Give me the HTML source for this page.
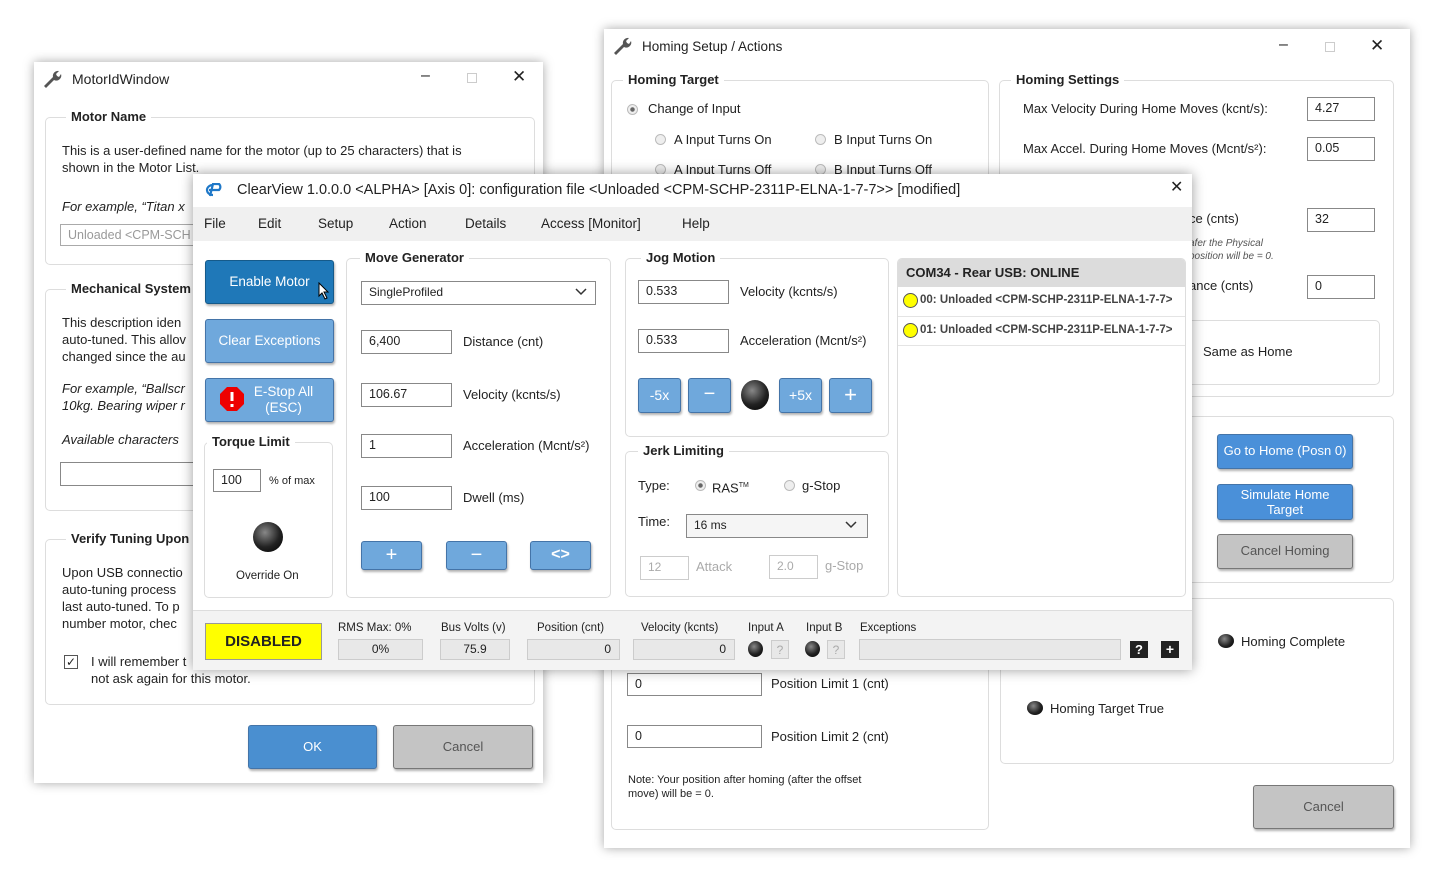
<!DOCTYPE html>
<html><head><meta charset="utf-8"><style>
*{box-sizing:border-box;margin:0;padding:0}
body{width:1452px;height:884px;background:#fff;position:relative;overflow:hidden;font-family:"Liberation Sans",sans-serif;font-size:13px;color:#222}
.a{position:absolute;white-space:nowrap}
.win{position:absolute;background:#fff;box-shadow:0 0 10px rgba(0,0,0,.35)}
.fs{position:absolute;border:1px solid #ddd;border-radius:5px}
.lg{position:absolute;background:#fff;padding:0 5px;font-weight:bold;font-size:13px;color:#222;line-height:16px}
.in{position:absolute;border:1px solid #888;background:#fff;font-size:12.5px;padding-left:7px;line-height:21px}
.btn{position:absolute;border:1px solid #4474a8;border-radius:3px;color:#fff;text-align:center;box-shadow:1px 2px 2px rgba(0,0,0,.3);font-size:13px}
.lb{background:#6fa8dc}
.gb{background:#c4c4c4;border-color:#777;color:#555}
.led{position:absolute;border-radius:50%;background:radial-gradient(circle at 40% 35%,#888,#222 55%,#000)}
.t{position:absolute;white-space:nowrap;line-height:16px}
.rad{position:absolute;width:11px;height:11px;border-radius:50%;border:1px solid #bbb;background:#eee}
.sb{position:absolute;background:#e8e8e8;border:1px solid #ccc;font-size:12px;text-align:right;padding-right:8px;line-height:18px}
</style></head><body>

<!-- Motor ID window -->
<div class="win" style="left:34px;top:62px;width:509px;height:721px">
<svg class="a" style="left:8px;top:7px" width="20" height="20" viewBox="0 0 20 20"><path d="M2 17 L11 8 A5 5 0 0 1 17 2 L14 5 L15 7 L17 8 L19 5 A5 5 0 0 1 12 11 L4 19 Z" fill="#555"/></svg>
<div class="t" style="left:38px;top:9px;font-size:14px">MotorIdWindow</div>
<div class="t" style="left:387px;top:6px;font-size:16px">–</div>
<div class="a" style="left:433px;top:11px;width:10px;height:10px;border:1px solid #ccc"></div>
<div class="t" style="left:478px;top:7px;font-size:17px">✕</div>
<div class="fs" style="left:11px;top:55px;width:490px;height:148px"></div>
<div class="lg" style="left:32px;top:47px">Motor Name</div>
<div class="t" style="left:28px;top:81px">This is a user-defined name for the motor (up to 25 characters) that is</div>
<div class="t" style="left:28px;top:98px">shown in the Motor List.</div>
<div class="t" style="left:28px;top:137px;font-style:italic">For example, “Titan x</div>
<div class="in" style="left:26px;top:162px;width:170px;height:22px;color:#999;border-color:#aaa">Unloaded &lt;CPM-SCH</div>
<div class="fs" style="left:11px;top:227px;width:490px;height:222px"></div>
<div class="lg" style="left:32px;top:219px">Mechanical System I</div>
<div class="t" style="left:28px;top:253px">This description iden</div>
<div class="t" style="left:28px;top:270px">auto-tuned. This allov</div>
<div class="t" style="left:28px;top:287px">changed since the au</div>
<div class="t" style="left:28px;top:319px;font-style:italic">For example, “Ballscr</div>
<div class="t" style="left:28px;top:336px;font-style:italic">10kg. Bearing wiper r</div>
<div class="t" style="left:28px;top:370px;font-style:italic">Available characters</div>
<div class="in" style="left:26px;top:400px;width:170px;height:24px"></div>
<div class="fs" style="left:11px;top:477px;width:490px;height:166px"></div>
<div class="lg" style="left:32px;top:469px">Verify Tuning Upon (</div>
<div class="t" style="left:28px;top:503px">Upon USB connectio</div>
<div class="t" style="left:28px;top:520px">auto-tuning process</div>
<div class="t" style="left:28px;top:537px">last auto-tuned. To p</div>
<div class="t" style="left:28px;top:554px">number motor, chec</div>
<div class="a" style="left:30px;top:593px;width:14px;height:14px;border:1px solid #555;font-size:12px;line-height:12px;text-align:center">✓</div>
<div class="t" style="left:57px;top:592px">I will remember t</div>
<div class="t" style="left:57px;top:609px">not ask again for this motor.</div>
<div class="btn" style="left:214px;top:663px;width:129px;height:44px;line-height:42px;background:#4a8fd0">OK</div>
<div class="btn gb" style="left:359px;top:663px;width:140px;height:44px;line-height:42px">Cancel</div>
</div>

<!-- Homing window -->
<div class="win" style="left:604px;top:29px;width:806px;height:819px">
<svg class="a" style="left:8px;top:7px" width="20" height="20" viewBox="0 0 20 20"><path d="M2 17 L11 8 A5 5 0 0 1 17 2 L14 5 L15 7 L17 8 L19 5 A5 5 0 0 1 12 11 L4 19 Z" fill="#555"/></svg>
<div class="t" style="left:38px;top:10px;font-size:13.5px">Homing Setup / Actions</div>
<div class="t" style="left:675px;top:8px;font-size:16px">–</div>
<div class="a" style="left:721px;top:13px;width:10px;height:10px;border:1px solid #ccc"></div>
<div class="t" style="left:766px;top:9px;font-size:17px">✕</div>
<div class="fs" style="left:7px;top:51px;width:378px;height:750px"></div>
<div class="lg" style="left:19px;top:43px">Homing Target</div>
<div class="rad" style="left:23px;top:75px;background:radial-gradient(circle,#666 30%,#eee 40%)"></div>
<div class="t" style="left:44px;top:72px">Change of Input</div>
<div class="rad" style="left:51px;top:105px"></div><div class="t" style="left:70px;top:103px">A Input Turns On</div>
<div class="rad" style="left:211px;top:105px"></div><div class="t" style="left:230px;top:103px">B Input Turns On</div>
<div class="rad" style="left:51px;top:135px"></div><div class="t" style="left:70px;top:133px">A Input Turns Off</div>
<div class="rad" style="left:211px;top:135px"></div><div class="t" style="left:230px;top:133px">B Input Turns Off</div>
<div class="in" style="left:23px;top:644px;width:135px;height:23px">0</div>
<div class="t" style="left:167px;top:647px">Position Limit 1 (cnt)</div>
<div class="in" style="left:23px;top:696px;width:135px;height:23px">0</div>
<div class="t" style="left:167px;top:700px">Position Limit 2 (cnt)</div>
<div class="t" style="left:24px;top:744px;font-size:11px;line-height:14px">Note: Your position after homing (after the offset<br>move) will be = 0.</div>

<div class="fs" style="left:395px;top:51px;width:395px;height:317px"></div>
<div class="lg" style="left:407px;top:43px">Homing Settings</div>
<div class="t" style="left:419px;top:72px">Max Velocity During Home Moves (kcnt/s):</div>
<div class="in" style="left:703px;top:68px;width:68px;height:24px">4.27</div>
<div class="t" style="left:419px;top:112px">Max Accel. During Home Moves (Mcnt/s²):</div>
<div class="in" style="left:703px;top:108px;width:68px;height:24px">0.05</div>
<div class="t" style="left:585px;top:182px">ce (cnts)</div>
<div class="in" style="left:703px;top:179px;width:68px;height:24px">32</div>
<div class="t" style="left:585px;top:208px;font-size:10px;font-style:italic;color:#555;line-height:13px">afer the Physical<br>position will be = 0.</div>
<div class="t" style="left:585px;top:249px">ance (cnts)</div>
<div class="in" style="left:703px;top:246px;width:68px;height:24px">0</div>
<div class="fs" style="left:570px;top:291px;width:206px;height:65px"></div>
<div class="t" style="left:599px;top:315px">Same as Home</div>

<div class="fs" style="left:396px;top:387px;width:394px;height:167px"></div>
<div class="btn" style="left:613px;top:405px;width:136px;height:35px;line-height:32px;background:#4a90d9">Go to Home (Posn 0)</div>
<div class="btn" style="left:613px;top:455px;width:136px;height:36px;line-height:15px;padding-top:2px;background:#4a90d9">Simulate Home<br>Target</div>
<div class="btn gb" style="left:613px;top:505px;width:136px;height:35px;line-height:32px">Cancel Homing</div>
<div class="fs" style="left:396px;top:569px;width:394px;height:166px"></div>
<div class="led" style="left:614px;top:605px;width:16px;height:14px"></div>
<div class="t" style="left:637px;top:605px">Homing Complete</div>
<div class="led" style="left:423px;top:672px;width:16px;height:14px"></div>
<div class="t" style="left:446px;top:672px">Homing Target True</div>
<div class="btn gb" style="left:649px;top:756px;width:141px;height:44px;line-height:42px">Cancel</div>
</div>

<!-- ClearView window -->
<div class="win" style="left:193px;top:174px;width:999px;height:496px;box-shadow:0 0 12px rgba(0,0,0,.4)">
<svg class="a" style="left:11px;top:9px" width="22" height="14" viewBox="0 0 22 14"><path d="M9 2 A6 5 0 1 0 9 12 M5 7 H15 A4 4 0 0 0 15 1 H9 L6 13" fill="none" stroke="#1f78c8" stroke-width="2.2"/></svg>
<div class="t" style="left:44px;top:8px;font-size:14.5px">ClearView 1.0.0.0 &lt;ALPHA&gt; [Axis 0]: configuration file &lt;Unloaded &lt;CPM-SCHP-2311P-ELNA-1-7-7&gt;&gt; [modified]</div>
<div class="t" style="left:977px;top:6px;font-size:16px">✕</div>
<div class="a" style="left:0;top:33px;width:999px;height:34px;background:#f0f0f0"></div>
<div class="t" style="left:11px;top:42px;font-size:13.5px">File</div>
<div class="t" style="left:65px;top:42px;font-size:13.5px">Edit</div>
<div class="t" style="left:125px;top:42px;font-size:13.5px">Setup</div>
<div class="t" style="left:196px;top:42px;font-size:13.5px">Action</div>
<div class="t" style="left:272px;top:42px;font-size:13.5px">Details</div>
<div class="t" style="left:348px;top:42px;font-size:13.5px">Access [Monitor]</div>
<div class="t" style="left:489px;top:42px;font-size:13.5px">Help</div>

<div class="btn" style="left:12px;top:86px;width:129px;height:44px;line-height:42px;background:#1f78b8;border-color:#155a8a;font-size:13.5px">Enable Motor</div>
<svg class="a" style="left:125px;top:108px" width="12" height="18" viewBox="0 0 12 18"><path d="M1 1 L1 14 L4 11 L7 17 L9 16 L6 10 L10 10 Z" fill="#fff" stroke="#000"/></svg>
<div class="btn lb" style="left:12px;top:145px;width:129px;height:44px;line-height:42px;font-size:13.5px">Clear Exceptions</div>
<div class="btn lb" style="left:12px;top:204px;width:129px;height:44px;line-height:16px;padding:5px 0 0 28px;font-size:13.5px">E-Stop All<br>(ESC)</div>
<svg class="a" style="left:26px;top:212px" width="26" height="26" viewBox="0 0 26 26"><polygon points="8,1 18,1 25,8 25,18 18,25 8,25 1,18 1,8" fill="#e00"/><rect x="11.5" y="6" width="3" height="9" fill="#fff"/><rect x="11.5" y="18" width="3" height="3" fill="#fff"/></svg>

<div class="fs" style="left:11px;top:268px;width:129px;height:156px"></div>
<div class="lg" style="left:14px;top:260px">Torque Limit</div>
<div class="in" style="left:20px;top:295px;width:48px;height:23px">100</div>
<div class="t" style="left:76px;top:299px;font-size:11px">% of max</div>
<div class="led" style="left:60px;top:348px;width:30px;height:30px"></div>
<div class="t" style="left:43px;top:394px;font-size:11.5px">Override On</div>

<div class="fs" style="left:153px;top:84px;width:265px;height:340px"></div>
<div class="lg" style="left:167px;top:76px">Move Generator</div>
<div class="in" style="left:168px;top:107px;width:235px;height:24px;font-size:12px">SingleProfiled</div>
<svg class="a" style="left:382px;top:114px" width="12" height="8"><path d="M1 1 L6 6 L11 1" fill="none" stroke="#333" stroke-width="1.5"/></svg>
<div class="in" style="left:168px;top:156px;width:91px;height:24px">6,400</div><div class="t" style="left:270px;top:160px">Distance (cnt)</div>
<div class="in" style="left:168px;top:209px;width:91px;height:24px">106.67</div><div class="t" style="left:270px;top:213px">Velocity (kcnts/s)</div>
<div class="in" style="left:168px;top:260px;width:91px;height:24px">1</div><div class="t" style="left:270px;top:264px">Acceleration (Mcnt/s²)</div>
<div class="in" style="left:168px;top:312px;width:91px;height:24px">100</div><div class="t" style="left:270px;top:316px">Dwell (ms)</div>
<div class="btn lb" style="left:168px;top:367px;width:61px;height:29px;line-height:26px;font-size:20px">+</div>
<div class="btn lb" style="left:253px;top:367px;width:61px;height:29px;line-height:26px;font-size:20px">−</div>
<div class="btn lb" style="left:337px;top:367px;width:61px;height:29px;line-height:26px;font-size:16px;font-weight:bold">&lt;&gt;</div>

<div class="fs" style="left:432px;top:84px;width:264px;height:179px"></div>
<div class="lg" style="left:448px;top:76px">Jog Motion</div>
<div class="in" style="left:445px;top:106px;width:91px;height:24px">0.533</div><div class="t" style="left:547px;top:110px">Velocity (kcnts/s)</div>
<div class="in" style="left:445px;top:155px;width:91px;height:24px">0.533</div><div class="t" style="left:547px;top:159px">Acceleration (Mcnt/s²)</div>
<div class="btn lb" style="left:445px;top:204px;width:43px;height:35px;line-height:33px;font-size:14px">-5x</div>
<div class="btn lb" style="left:495px;top:204px;width:43px;height:35px;line-height:31px;font-size:20px">−</div>
<div class="led" style="left:548px;top:206px;width:28px;height:30px"></div>
<div class="btn lb" style="left:586px;top:204px;width:43px;height:35px;line-height:33px;font-size:14px">+5x</div>
<div class="btn lb" style="left:636px;top:204px;width:43px;height:35px;line-height:31px;font-size:22px">+</div>

<div class="fs" style="left:432px;top:277px;width:264px;height:146px"></div>
<div class="lg" style="left:445px;top:269px">Jerk Limiting</div>
<div class="t" style="left:445px;top:304px">Type:</div>
<div class="rad" style="left:502px;top:306px;background:radial-gradient(circle,#666 30%,#eee 40%)"></div><div class="t" style="left:519px;top:304px">RAS<sup style="font-size:7px">TM</sup></div>
<div class="rad" style="left:591px;top:306px"></div><div class="t" style="left:609px;top:304px">g-Stop</div>
<div class="t" style="left:445px;top:340px">Time:</div>
<div class="in" style="left:493px;top:340px;width:182px;height:24px;font-size:12px;background:#f5f5f5">16 ms</div>
<svg class="a" style="left:652px;top:347px" width="12" height="8"><path d="M1 1 L6 6 L11 1" fill="none" stroke="#333" stroke-width="1.5"/></svg>
<div class="in" style="left:447px;top:382px;width:49px;height:24px;color:#aaa;border-color:#ccc;font-size:12px">12</div><div class="t" style="left:503px;top:385px;color:#aaa">Attack</div>
<div class="in" style="left:576px;top:381px;width:49px;height:24px;color:#aaa;border-color:#ccc;font-size:12px">2.0</div><div class="t" style="left:632px;top:384px;color:#aaa">g-Stop</div>

<div class="fs" style="left:704px;top:84px;width:289px;height:339px;overflow:hidden">
<div class="a" style="left:0;top:0;width:289px;height:28px;background:#dcdcdc"></div>
<div class="t" style="left:8px;top:6px;font-weight:bold">COM34 - Rear USB: ONLINE</div>
<div class="a" style="left:0;top:57px;width:289px;height:1px;background:#e4e4e4"></div>
<div class="a" style="left:0;top:86px;width:289px;height:1px;background:#e4e4e4"></div>
<div class="a" style="left:5px;top:34px;width:15px;height:15px;border-radius:50%;background:#ff0;border:1px solid #555"></div>
<div class="t" style="left:22px;top:33px;font-weight:bold;font-size:11.5px;color:#444">00: Unloaded &lt;CPM-SCHP-2311P-ELNA-1-7-7&gt;</div>
<div class="a" style="left:5px;top:64px;width:15px;height:15px;border-radius:50%;background:#ff0;border:1px solid #555"></div>
<div class="t" style="left:22px;top:63px;font-weight:bold;font-size:11.5px;color:#444">01: Unloaded &lt;CPM-SCHP-2311P-ELNA-1-7-7&gt;</div>
</div>

<div class="a" style="left:0;top:436px;width:999px;height:60px;background:#f3f3f3;border-top:1px solid #ddd"></div>
<div class="a" style="left:12px;top:449px;width:117px;height:37px;background:#ff0;border:1px solid #999;font-weight:bold;font-size:15px;text-align:center;line-height:35px">DISABLED</div>
<div class="t" style="left:145px;top:446px;font-size:11.5px">RMS Max: 0%</div>
<div class="t" style="left:248px;top:446px;font-size:11.5px">Bus Volts (v)</div>
<div class="t" style="left:344px;top:446px;font-size:11.5px">Position (cnt)</div>
<div class="t" style="left:448px;top:446px;font-size:11.5px">Velocity (kcnts)</div>
<div class="t" style="left:555px;top:446px;font-size:11.5px">Input A</div>
<div class="t" style="left:613px;top:446px;font-size:11.5px">Input B</div>
<div class="t" style="left:667px;top:446px;font-size:11.5px">Exceptions</div>
<div class="sb" style="left:145px;top:465px;width:85px;height:21px;text-align:center;padding:0">0%</div>
<div class="sb" style="left:247px;top:465px;width:70px;height:21px;text-align:center;padding:0">75.9</div>
<div class="sb" style="left:334px;top:465px;width:93px;height:21px">0</div>
<div class="sb" style="left:440px;top:465px;width:102px;height:21px">0</div>
<div class="led" style="left:555px;top:467px;width:15px;height:16px"></div>
<div class="sb" style="left:578px;top:466px;width:18px;height:19px;padding:0;text-align:center;color:#aaa">?</div>
<div class="led" style="left:612px;top:467px;width:15px;height:16px"></div>
<div class="sb" style="left:634px;top:466px;width:18px;height:19px;padding:0;text-align:center;color:#aaa">?</div>
<div class="sb" style="left:666px;top:465px;width:262px;height:21px"></div>
<div class="a" style="left:937px;top:467px;width:18px;height:17px;background:#222;color:#fff;font-weight:bold;text-align:center;line-height:17px;font-size:13px">?</div>
<div class="a" style="left:968px;top:467px;width:18px;height:17px;background:#222;color:#fff;font-weight:bold;text-align:center;line-height:16px;font-size:14px">+</div>
</div>
</body></html>
